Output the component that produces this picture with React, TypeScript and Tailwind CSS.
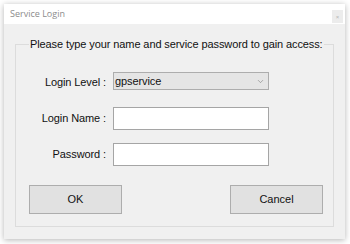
import { ChevronDown } from 'lucide-react';

const font = { fontFamily: '"Liberation Sans", Arial, sans-serif' };

function Row({ label, children }: { label: string; children: React.ReactNode }) {
  return (
    <div className="flex items-center h-[23px]">
      <span className="w-[77px] text-right pr-[1px] text-[11px] tracking-[-0.1px] text-[#111]">{label}</span>
      <div className="ml-[6px] w-[156px]">{children}</div>
    </div>
  );
}

export default function App() {
  return (
    <div className="w-[350px] h-[244px] bg-white p-[4px] pr-[5px]" style={font}>
      <div className="flex flex-col h-[235px] bg-[#f0f0f0] shadow-[0_1px_6px_rgba(0,0,0,0.3)]">
        {/* title bar */}
        <div className="h-[20px] bg-white flex items-center justify-between pl-[6px] pr-[2px]">
          <span className="text-[9px] text-[#8c8c8c]" style={{ fontFamily: '"Open Sans", sans-serif' }}>Service Login</span>
          <span className="w-[11px] h-[13px] mt-[5px] bg-[#ececec] flex items-center justify-center text-[6px] leading-none text-[#b5b5b5]">×</span>
        </div>

        <div className="flex-1 px-[11px] pt-[13px] pb-[12px]">
          <fieldset className="h-full border border-[#dcdcdc] px-0 pb-0 m-0 flex flex-col">
            <legend className="ml-[13px] px-[1px] text-[11px] tracking-[-0.1px] leading-[14px] whitespace-nowrap text-[#111]">
              Please type your name and service password to gain access:
            </legend>

            <div className="pl-[14px] pt-[20px] flex flex-col gap-[13px]">
              <Row label="Login Level :">
                <div className="h-[18px] mt-[-3px] bg-[#e5e5e5] border border-[#adadad] flex items-center justify-between pl-[1px] pr-[3px]">
                  <span className="text-[11px] tracking-[-0.1px] text-[#111]">gpservice</span>
                  <ChevronDown size={9} strokeWidth={1.5} className="text-[#777]" />
                </div>
              </Row>
              <Row label="Login Name :">
                <div className="h-[23px] bg-white border border-[#a5a5a5]" />
              </Row>
              <Row label="Password :">
                <div className="h-[23px] bg-white border border-[#a5a5a5]" />
              </Row>
            </div>

            <div className="mt-auto mb-[12px] pl-[13px] pr-[10px] flex justify-between">
              <button className="w-[93px] h-[29px] bg-[#e1e1e1] border border-[#adadad] text-[11px] text-[#111]">OK</button>
              <button className="w-[93px] h-[29px] bg-[#e1e1e1] border border-[#adadad] text-[11px] text-[#111]">Cancel</button>
            </div>
          </fieldset>
        </div>
      </div>
    </div>
  );
}
